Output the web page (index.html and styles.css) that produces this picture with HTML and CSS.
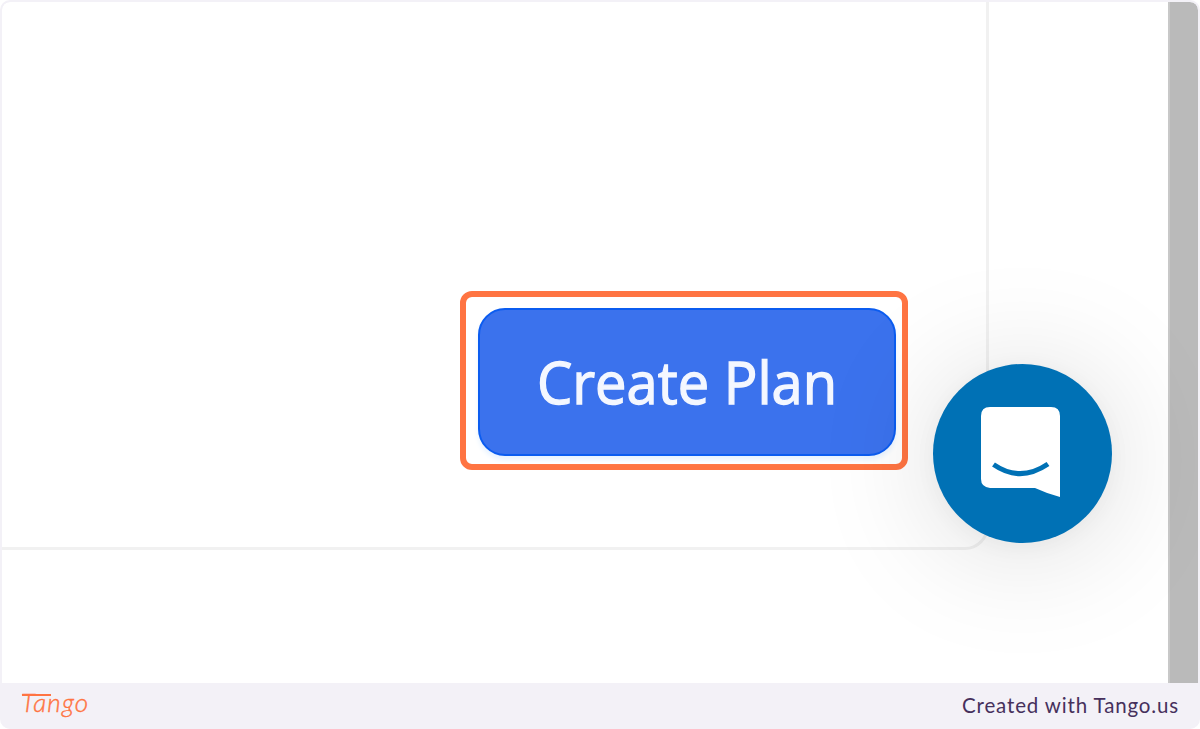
FILE: index.html
```html
<!DOCTYPE html>
<html lang="en">
<head>
    <meta charset="UTF-8">
    <meta name="viewport" content="width=device-width, initial-scale=1.0">
    <link rel="stylesheet" href="styles.css">
    <title>Create Plan</title>
</head>
<body>
<div class="frame">
    <div class="screen">
        <div class="content">
            <div class="panel">
                <div class="highlight">
                    <button class="btn" type="button"><span class="btn-text">Create Plan</span></button>
                </div>
            </div>
        </div>
        <div class="scrollbar"></div>
        <div class="launcher">
            <svg class="launcher-icon" viewBox="0 0 80 92">
                <path fill="#fff" d="M9 0H70Q79 0 79 9V90Q67 87 54 81H9Q0 80 0 72V9Q0 0 9 0Z"/>
                <path fill="none" stroke="#0071b5" stroke-width="5" d="M12.500 57.500Q39 76 67 57"/>
            </svg>
        </div>
    </div>
    <div class="footer">
        <div class="logo">Tango</div>
        <div class="credit">Created with Tango.us</div>
    </div>
</div>
</body>
</html>
```
FILE: styles.css
```css
/* Global */
*, :after, :before {
    box-sizing: border-box;
}

body {
    margin: 0;
    background: #fff;
}

.frame {
    display: flex;
    flex-direction: column;
    width: 1200px;
    height: 729px;
    border: 2px solid #f3f1f7;
    border-bottom: 0;
    border-radius: 10px;
    overflow: hidden;
    background: #f3f1f7;
}

/* Screen */
.screen {
    position: relative;
    display: flex;
    height: 681px;
    overflow: hidden;
    border-radius: 8px 8px 0 0;
    background: #fff;
}

.content {
    flex: 1;
}

.panel {
    display: flex;
    justify-content: flex-end;
    align-items: flex-end;
    width: 987px;
    height: 548px;
    padding: 0 78px 77px 0;
    border-right: 3px solid #f1f1f1;
    border-bottom: 3px solid #f1f1f1;
    border-bottom-right-radius: 24px;
}

.highlight {
    width: 448px;
    height: 179px;
    padding: 11px 6px 8px 12px;
    border: 6px solid #ff7442;
    border-radius: 12px;
}

.scrollbar {
    width: 30px;
    background: #bababa;
    border-left: 2px solid #c8c8c8;
}

/* Button */
.btn {
    display: flex;
    justify-content: center;
    align-items: center;
    width: 418px;
    height: 148px;
    padding: 0 0 2px;
    border: 2px solid #0b5cf0;
    border-radius: 27px;
    background: #3b72ed;
    box-shadow: 0 4px 5px #e8f3ff;
    color: #f4f7ff;
    font-family: "Open Sans", "Noto Sans", sans-serif;
    font-size: 59px;
    line-height: 80px;
    -webkit-text-stroke: 1.3px #f4f7ff;
}

.btn-text {
    transform: scaleX(.95);
    white-space: nowrap;
}

/* Chat launcher */
.launcher {
    position: absolute;
    left: 931px;
    top: 362px;
    display: flex;
    width: 179px;
    height: 179px;
    padding: 43px 0 0 48px;
    border-radius: 50%;
    background: #0071b5;
    box-shadow: 0 4px 22px rgba(0, 0, 0, .04), 0 7px 125px rgba(0, 0, 0, .15);
}

.launcher-icon {
    width: 80px;
    height: 92px;
}

/* Footer */
.footer {
    display: flex;
    justify-content: space-between;
    align-items: center;
    height: 46px;
    padding: 0 19px 3px 19px;
}

.logo {
    position: relative;
    padding-bottom: 5px;
    color: #ff7442;
    font-family: Lato, sans-serif;
    font-size: 26px;
    font-style: italic;
    font-weight: 300;
    letter-spacing: 1.2px;
    -webkit-text-stroke: .4px #ff7442;
}

/* long bar of the T */
.logo:before {
    content: "";
    position: absolute;
    left: 1px;
    top: 8px;
    width: 29px;
    height: 2px;
    background: #ff7442;
}

.credit {
    color: #46305c;
    font-family: Lato, sans-serif;
    font-size: 20.5px;
    letter-spacing: .85px;
}
```
